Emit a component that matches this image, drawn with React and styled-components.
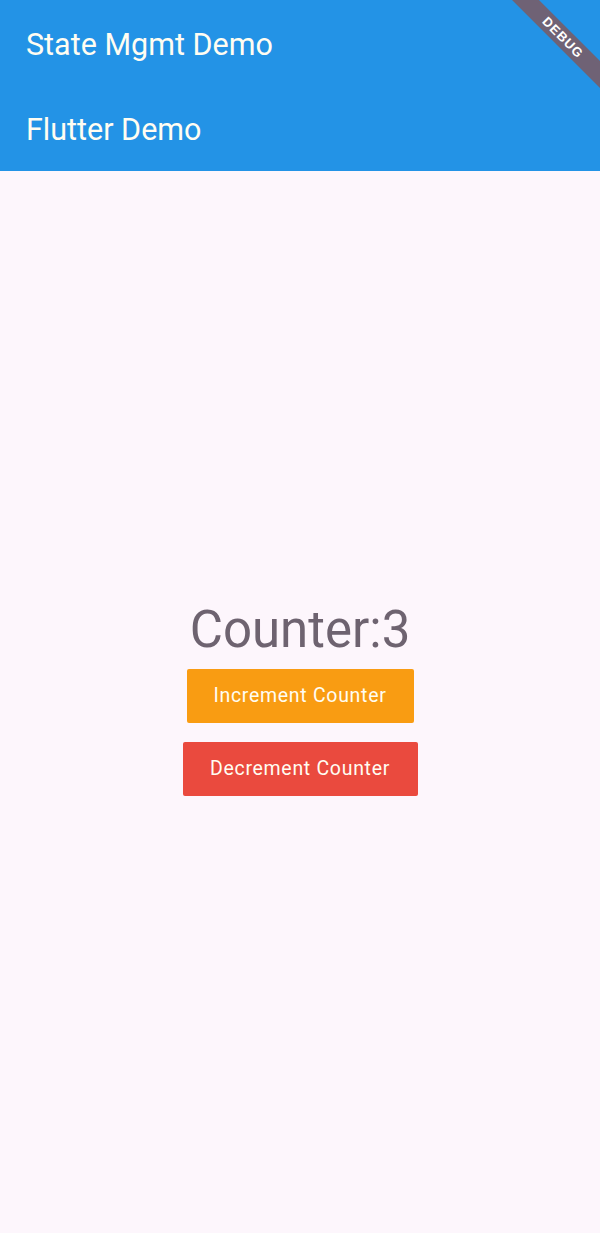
import styled, { createGlobalStyle } from 'styled-components'

const GlobalStyle = createGlobalStyle`
  html, body {
    margin: 0;
    padding: 0;
    background: #fdf6fc;
    font-family: Roboto, 'Liberation Sans', sans-serif;
  }
`

const Screen = styled.div`
  position: relative;
  width: 600px;
  height: 1233px;
  display: flex;
  flex-direction: column;
  overflow: hidden;
  background: #fdf6fc;
`

const AppBar = styled.header`
  height: ${props => props.height}px;
  background: #2393e6;
  color: #fffdf2;
  display: flex;
  align-items: center;
  padding-left: 26px;
  font-size: 30.5px;
  flex-shrink: 0;
`

const Body = styled.main`
  flex: 1;
  display: flex;
  flex-direction: column;
  align-items: center;
  justify-content: center;
  padding-top: 10px;
`

const Counter = styled.div`
  font-size: 51px;
  color: #6e6370;
  line-height: 60px;
  margin-bottom: 9px;
`

const Button = styled.button`
  border: none;
  border-radius: 2px;
  width: ${props => props.width}px;
  height: 54px;
  background: ${props => props.color};
  color: #fffdf2;
  font-family: Roboto, 'Liberation Sans', sans-serif;
  font-size: 19.5px;
  letter-spacing: 0.7px;
  margin-bottom: 19px;
  padding: 0;
`

const Banner = styled.div`
  position: absolute;
  top: 28px;
  left: 483px;
  width: 160px;
  height: 19px;
  background: #6f6275;
  transform: rotate(45deg);
  display: flex;
  align-items: center;
  justify-content: center;
  color: #fff;
  font-family: 'Liberation Sans', Arial, sans-serif;
  font-size: 13px;
  font-weight: bold;
  letter-spacing: 1px;
`

export default function App() {
  return (
    <Screen>
      <GlobalStyle />
      <AppBar height={88}>State Mgmt Demo</AppBar>
      <AppBar height={83}>Flutter Demo</AppBar>
      <Body>
        <Counter>Counter:3</Counter>
        <Button color="#f99c12" width={227}>Increment Counter</Button>
        <Button color="#ea4a3e" width={235}>Decrement Counter</Button>
      </Body>
      <Banner>DEBUG</Banner>
    </Screen>
  )
}
